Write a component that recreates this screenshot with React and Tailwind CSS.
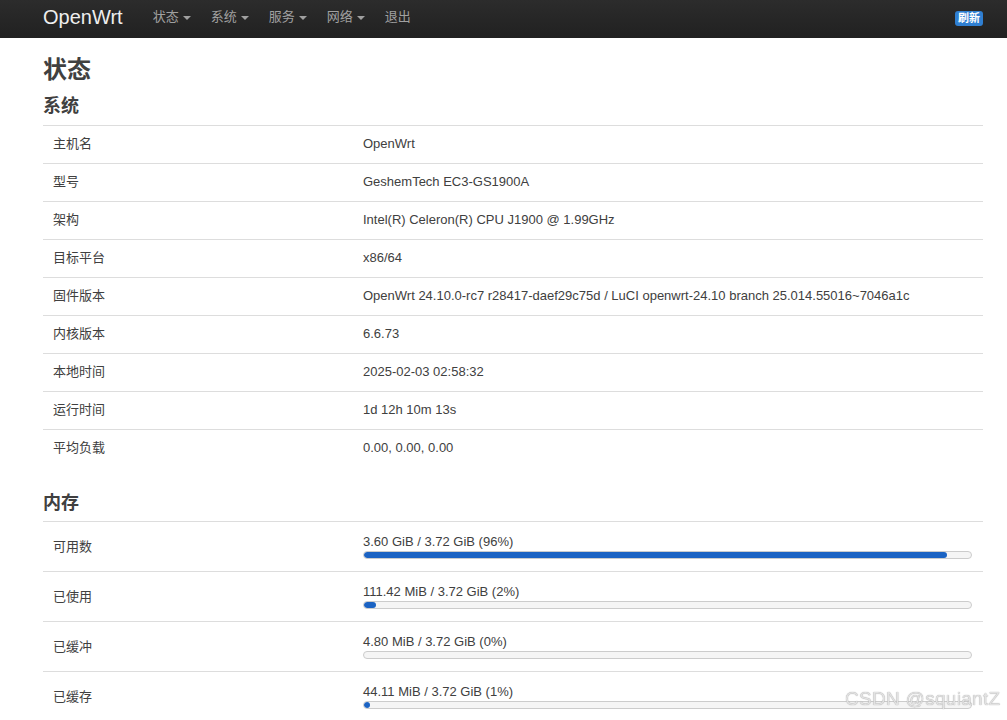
import React from 'react';

const font = { fontFamily: '"Liberation Sans", Arial, "Noto Sans CJK SC", sans-serif' };

const navItems = [
  { label: '状态', caret: true },
  { label: '系统', caret: true },
  { label: '服务', caret: true },
  { label: '网络', caret: true },
  { label: '退出', caret: false },
];

const systemRows = [
  ['主机名', 'OpenWrt'],
  ['型号', 'GeshemTech EC3-GS1900A'],
  ['架构', 'Intel(R) Celeron(R) CPU J1900 @ 1.99GHz'],
  ['目标平台', 'x86/64'],
  ['固件版本', 'OpenWrt 24.10.0-rc7 r28417-daef29c75d / LuCI openwrt-24.10 branch 25.014.55016~7046a1c'],
  ['内核版本', '6.6.73'],
  ['本地时间', '2025-02-03 02:58:32'],
  ['运行时间', '1d 12h 10m 13s'],
  ['平均负载', '0.00, 0.00, 0.00'],
];

const memoryRows = [
  ['可用数', '3.60 GiB / 3.72 GiB (96%)', 96],
  ['已使用', '111.42 MiB / 3.72 GiB (2%)', 2],
  ['已缓冲', '4.80 MiB / 3.72 GiB (0%)', 0],
  ['已缓存', '44.11 MiB / 3.72 GiB (1%)', 1],
];

const App = () => {
  return (
    <div className="min-h-screen bg-white text-[#404040]" style={font}>
      {/* Navbar */}
      <div className="h-[38px] bg-gradient-to-b from-[#2c2c2c] to-[#212121]">
        <div className="ml-[43px] w-[940px] h-full flex items-center pb-[5px]">
          <span className="text-[20px] text-[#eeeeee] leading-none mr-[20px]">OpenWrt</span>
          {navItems.map((item) => (
            <div key={item.label} className="px-[10px] flex items-center text-[13px] text-[#a0a0a0] leading-none">
              <span>{item.label}</span>
              {item.caret && (
                <span className="ml-[4px] mt-[2px] w-0 h-0 border-x-[4px] border-x-transparent border-t-[4px] border-t-[#a0a0a0]"></span>
              )}
            </div>
          ))}
          <span className="ml-auto mt-[3px] px-[3px] h-[15px] flex items-center rounded-[3px] bg-[#2f7fd2] text-white text-[11px] font-bold leading-none">
            刷新
          </span>
        </div>
      </div>

      {/* Content */}
      <div className="ml-[43px] w-[940px] pt-[17px]">
        <h1 className="text-[24px] font-bold leading-[30px]">状态</h1>

        <h2 className="mt-[9px] mb-[7px] text-[18px] font-bold leading-[24px]">系统</h2>
        <div>
          {systemRows.map(([k, v]) => (
            <div key={k} className="flex h-[38px] items-center pb-[1px] border-t border-[#dddddd] text-[13px]">
              <div className="w-[310px] pl-[10px]">{k}</div>
              <div className="flex-1 pl-[10px]">{v}</div>
            </div>
          ))}
        </div>

        <h2 className="mt-[24px] mb-[6px] text-[18px] font-bold leading-[24px]">内存</h2>
        <div>
          {memoryRows.map(([k, v, pct]) => (
            <div key={k} className="flex h-[50px] items-center border-t border-[#dddddd] text-[13px]">
              <div className="w-[310px] pl-[10px]">{k}</div>
              <div className="flex-1 pl-[10px] pr-[11px]">
                <div className="leading-[16px]">{v}</div>
                <div className="mt-[1px] h-[8px] rounded-[4px] border border-[#cccccc] bg-[#f5f5f5] overflow-hidden">
                  <div className="h-full rounded-[3px] bg-[#1b63c3]" style={{ width: `${pct}%` }}></div>
                </div>
              </div>
            </div>
          ))}
        </div>
      </div>

      {/* Watermark */}
      <div className="fixed left-[845px] top-[689px] text-[19px] tracking-[0.3px] text-[#e2e2e2] leading-none" style={{ textShadow: '0 0 1px #8a8a8a' }}>
        CSDN @squiantZ
      </div>
    </div>
  );
};

export default App;
